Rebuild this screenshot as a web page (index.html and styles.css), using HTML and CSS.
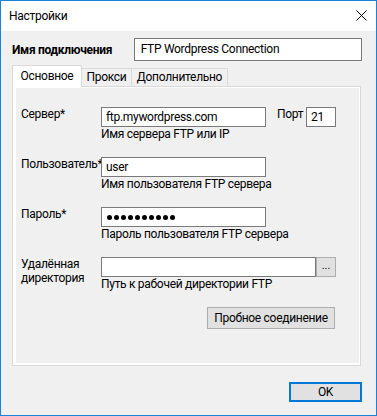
FILE: index.html
```html
<!DOCTYPE html>
<html lang="ru">
<head>
<meta charset="utf-8">
<title>Настройки</title>
<link rel="stylesheet" href="styles.css">
</head>
<body>
<div class="window">
  <div class="titlebar">
    <span class="title">Настройки</span>
    <svg class="close" width="11" height="11" viewBox="0 0 11 11"><path d="M0.5 0.5 L10.5 10.5 M10.5 0.5 L0.5 10.5" stroke="#000" stroke-width="1" fill="none"/></svg>
  </div>
  <div class="main">
    <div class="name-row">
      <span class="name-label">Имя подключения</span>
      <div class="name-input">FTP Wordpress Connection</div>
    </div>
    <div class="tabs">
      <div class="tab active">Основное</div>
      <div class="tab tab-proxy">Прокси</div>
      <div class="tab tab-extra">Дополнительно</div>
    </div>
    <div class="panel">
      <div class="page">
        <div class="row">
          <div class="lbl">Сервер*</div>
          <div class="field">
            <div class="line">
              <div class="input">ftp.mywordpress.com</div>
              <span class="port-label">Порт</span>
              <div class="input port">21</div>
            </div>
            <div class="hint">Имя сервера FTP или IP</div>
          </div>
        </div>
        <div class="row">
          <div class="lbl">Пользователь*</div>
          <div class="field">
            <div class="input">user</div>
            <div class="hint">Имя пользователя FTP сервера</div>
          </div>
        </div>
        <div class="row">
          <div class="lbl">Пароль*</div>
          <div class="field">
            <div class="input pass"><span class="dot"></span><span class="dot"></span><span class="dot"></span><span class="dot"></span><span class="dot"></span><span class="dot"></span><span class="dot"></span><span class="dot"></span><span class="dot"></span><span class="dot"></span></div>
            <div class="hint">Пароль пользователя FTP сервера</div>
          </div>
        </div>
        <div class="row">
          <div class="lbl">Удалённая<br>директория</div>
          <div class="field">
            <div class="line">
              <div class="input dir"></div>
              <div class="browse">...</div>
            </div>
            <div class="hint">Путь к рабочей директории FTP</div>
          </div>
        </div>
        <div class="test-btn">Пробное соединение</div>
      </div>
    </div>
    <div class="footer">
      <div class="ok-btn">OK</div>
    </div>
  </div>
</div>
</body>
</html>
```

FILE: styles.css
```css
html, body {
  margin: 0;
  padding: 0;
  background: #f0f0f0;
}

.window {
  box-sizing: border-box;
  width: 377px;
  height: 416px;
  border: 1px solid #1883d7;
  background: #f0f0f0;
  font-family: Roboto, "Noto Sans", sans-serif;
  font-size: 12px;
  letter-spacing: -0.3px;
  color: #000;
  overflow: hidden;
}

.titlebar {
  height: 30px;
  background: #fff;
  display: flex;
  justify-content: space-between;
  align-items: flex-start;
  padding-left: 8px;
}

.title {
  line-height: 30px;
  font-size: 12px;
}

.close {
  margin-top: 9px;
  margin-right: 9px;
}

.main {
  padding: 7px 14px 0 11px;
}

.name-row {
  display: flex;
  align-items: center;
  height: 23px;
}

.name-label {
  width: 122px;
  font-weight: bold;
  line-height: 16px;
  padding-top: 1px;
}

.name-input {
  box-sizing: border-box;
  width: 229px;
  height: 23px;
  border: 1px solid #7a7a7a;
  background: #fff;
  line-height: 21px;
  padding-left: 6px;
}

.tabs {
  display: flex;
  align-items: flex-end;
  height: 21px;
  margin-top: 4px;
}

.tab {
  box-sizing: border-box;
  height: 18px;
  border: 1px solid #d9d9d9;
  border-bottom: none;
  margin-left: -1px;
  line-height: 16px;
  text-align: center;
  background: #f0f0f0;
}

.tab.active {
  width: 70px;
  height: 22px;
  margin-left: 0;
  margin-bottom: -1px;
  background: #fff;
  position: relative;
  z-index: 1;
  line-height: 20px;
}

.tab-proxy {
  width: 51px;
}

.tab-extra {
  width: 97px;
}

.panel {
  box-sizing: border-box;
  width: 349px;
  height: 280px;
  border: 1px solid #d9d9d9;
  background: #fff;
  padding: 1px 1px 2px 3px;
}

.page {
  height: 100%;
  background: #f0f0f0;
  padding: 19px 0 0 5px;
  box-sizing: border-box;
}

.row {
  display: flex;
  margin-bottom: 16px;
}

.lbl {
  width: 80px;
  line-height: 14px;
  white-space: nowrap;
}

.field {
  display: flex;
  flex-direction: column;
}

.line {
  display: flex;
  align-items: flex-start;
}

.input {
  box-sizing: border-box;
  width: 165px;
  height: 20px;
  border: 1px solid #7a7a7a;
  background: #fff;
  line-height: 18px;
  padding-left: 4px;
}

.port-label {
  margin-left: 11px;
  line-height: 14px;
  width: 29px;
}

.input.port {
  width: 30px;
  padding-left: 4px;
}

.input.pass {
  display: flex;
  align-items: center;
  gap: 2px;
  padding-left: 5px;
}

.dot {
  width: 5px;
  height: 5px;
  border-radius: 50%;
  background: #000;
}

.input.dir {
  width: 215px;
}

.browse {
  box-sizing: border-box;
  width: 20px;
  height: 20px;
  border: 1px solid #adadad;
  background: #e1e1e1;
  text-align: center;
  line-height: 15px;
  font-size: 11px;
  letter-spacing: 0;
}

.hint {
  line-height: 14px;
  height: 14px;
  white-space: nowrap;
}

.test-btn {
  box-sizing: border-box;
  width: 128px;
  height: 22px;
  margin-left: 186px;
  margin-top: 1px;
  border: 1px solid #adadad;
  background: #e1e1e1;
  text-align: center;
  line-height: 20px;
}

.footer {
  display: flex;
  justify-content: flex-end;
  margin-top: 16px;
}

.ok-btn {
  box-sizing: border-box;
  width: 73px;
  height: 20px;
  border: 2px solid #0078d7;
  background: #e1e1e1;
  text-align: center;
  line-height: 16px;
}
```
